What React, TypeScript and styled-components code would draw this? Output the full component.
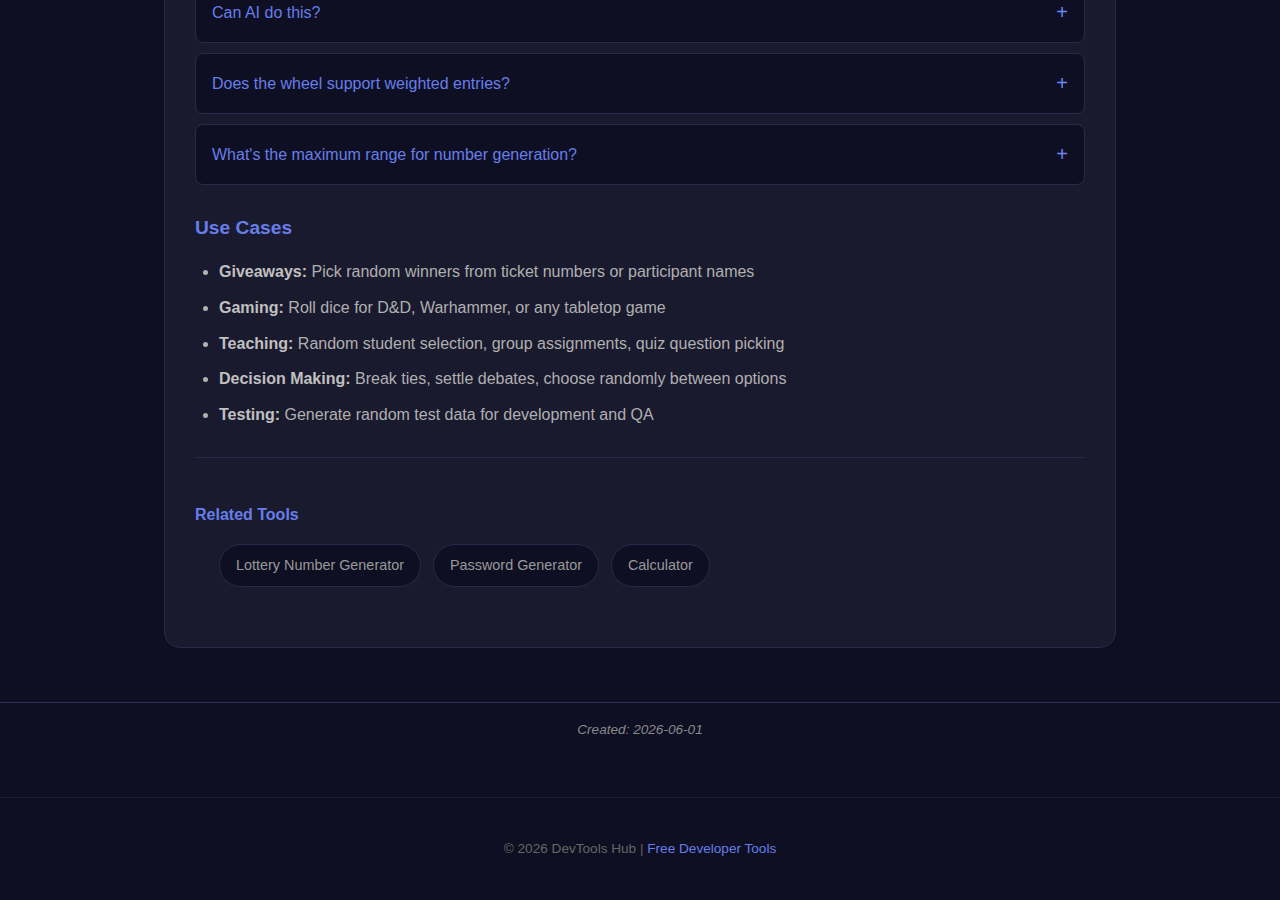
import React from "react";
import styled, { createGlobalStyle } from "styled-components";

const GlobalStyle = createGlobalStyle`
  html, body {
    margin: 0;
    padding: 0;
    background: #0f0f23;
    font-family: "Liberation Sans", Arial, sans-serif;
    color: #b0b0b0;
  }
  * { box-sizing: border-box; }
`;

const Page = styled.div`
  min-height: 900px;
  overflow: hidden;
  background: #0f0f23;
`;

const Card = styled.main`
  width: 952px;
  margin: -49px auto 0;
  padding: 30px;
  background: #1a1a2e;
  border: 1px solid #2a2a4a;
  border-radius: 16px;
`;

const FaqList = styled.div`
  display: flex;
  flex-direction: column;
  gap: 10px;
`;

const FaqItem = styled.div`
  display: flex;
  align-items: center;
  justify-content: space-between;
  height: 61px;
  padding: 0 16px;
  background: #0f0f23;
  border: 1px solid #2a2a4a;
  border-radius: 8px;
`;

const Question = styled.span`
  font-size: 16px;
  color: #667eea;
`;

const PlusSign = styled.span`
  font-size: 20px;
  line-height: 1;
  margin-top: -2px;
  color: #6f86f5;
`;

const SectionTitle = styled.h3`
  margin: 31px 0 20px;
  font-size: 19.2px;
  line-height: 23px;
  font-weight: 700;
  color: #667eea;
`;

const UseList = styled.ul`
  margin: 0;
  padding-left: 24px;
`;

const UseItem = styled.li`
  margin-bottom: 10px;
  font-size: 16px;
  line-height: 25.8px;
  color: #b0b0b0;

  strong {
    color: #c0c0c0;
    font-weight: 700;
  }
`;

const Divider = styled.hr`
  margin: 29px 0 0;
  border: none;
  border-top: 1px solid #2a2a4a;
`;

const RelatedTitle = styled.h4`
  margin: 47px 0 20px;
  font-size: 16px;
  line-height: 19px;
  font-weight: 700;
  color: #667eea;
`;

const ChipRow = styled.div`
  display: flex;
  gap: 12px;
  padding-left: 24px;
  margin-bottom: 30px;
`;

const Chip = styled.a`
  display: inline-flex;
  align-items: center;
  height: 43px;
  padding: 0 16px;
  background: #0f0f23;
  border: 1px solid #2a2a4a;
  border-radius: 22px;
  font-size: 14.4px;
  color: #999;
  text-decoration: none;
`;

const MetaBar = styled.div`
  margin-top: 54px;
  border-top: 1px solid #2e2e55;
  padding: 19px 20px 59px;
  text-align: center;
  font-size: 13.6px;
  line-height: 16px;
  font-style: italic;
  color: #888;
`;

const SiteFooter = styled.footer`
  border-top: 1px solid #1f1f3a;
  padding: 43px 20px 40px;
  text-align: center;
  font-size: 13.6px;
  line-height: 16px;
  color: #666;
`;

const FooterLink = styled.a`
  color: #667eea;
  text-decoration: none;
`;

const faqs = [
  "Can AI do this?",
  "Does the wheel support weighted entries?",
  "What's the maximum range for number generation?",
];

const useCases = [
  ["Giveaways:", "Pick random winners from ticket numbers or participant names"],
  ["Gaming:", "Roll dice for D&D, Warhammer, or any tabletop game"],
  ["Teaching:", "Random student selection, group assignments, quiz question picking"],
  ["Decision Making:", "Break ties, settle debates, choose randomly between options"],
  ["Testing:", "Generate random test data for development and QA"],
];

const related = ["Lottery Number Generator", "Password Generator", "Calculator"];

export default function App() {
  return (
    <Page>
      <GlobalStyle />
      <Card>
        <FaqList>
          {faqs.map((q) => (
            <FaqItem key={q}>
              <Question>{q}</Question>
              <PlusSign>+</PlusSign>
            </FaqItem>
          ))}
        </FaqList>

        <SectionTitle>Use Cases</SectionTitle>
        <UseList>
          {useCases.map(([label, text]) => (
            <UseItem key={label}>
              <strong>{label}</strong> {text}
            </UseItem>
          ))}
        </UseList>

        <Divider />

        <RelatedTitle>Related Tools</RelatedTitle>
        <ChipRow>
          {related.map((r) => (
            <Chip key={r} href="#">
              {r}
            </Chip>
          ))}
        </ChipRow>
      </Card>

      <MetaBar>Created: 2026-06-01</MetaBar>

      <SiteFooter>
        © 2026 DevTools Hub | <FooterLink href="#">Free Developer Tools</FooterLink>
      </SiteFooter>
    </Page>
  );
}
